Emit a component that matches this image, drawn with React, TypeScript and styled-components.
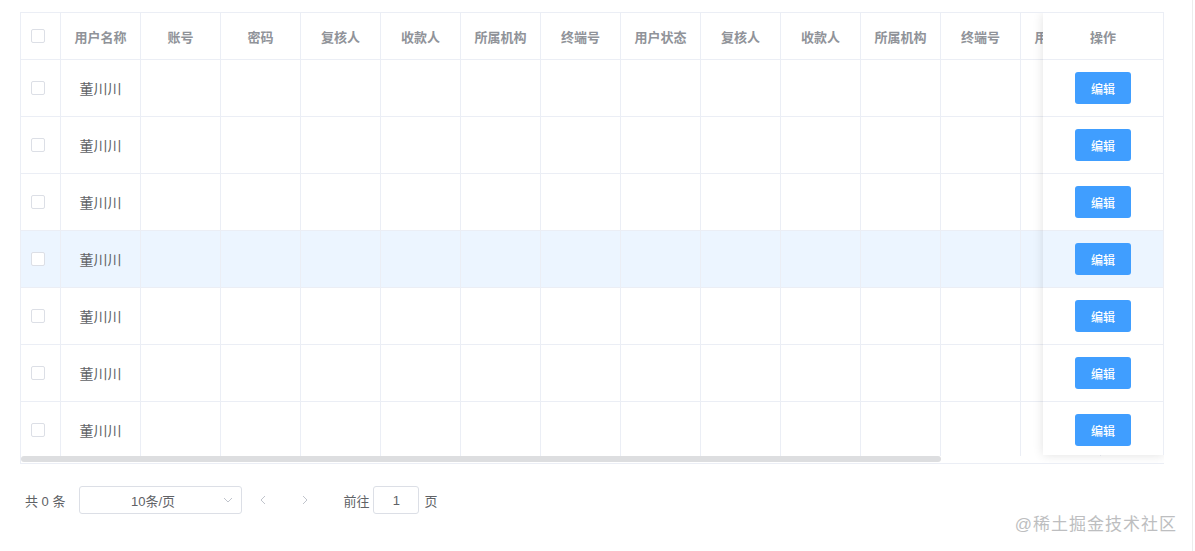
import React from 'react'
import styled, { createGlobalStyle } from 'styled-components'

const GlobalStyle = createGlobalStyle`
  html, body {
    margin: 0;
    padding: 0;
    background: #fff;
  }
  body {
    font-family: "Helvetica Neue", "Liberation Sans", "Noto Sans CJK SC", sans-serif;
    color: #606266;
  }
  * { box-sizing: border-box; }
`

const Page = styled.div`
  width: 1195px;
  height: 551px;
  padding: 12px 0 0 20px;
  position: relative;
  overflow: hidden;
`

const TableFrame = styled.div`
  position: relative;
  width: 1144px;
  border: 1px solid #ebeef5;
  border-right: none;
  overflow: hidden;
`

const BodyScroll = styled.div`
  overflow: hidden;
  width: 100%;
  height: 443px;
`

const Grid = styled.div`
  display: grid;
  grid-template-columns: 40px repeat(13, 80px) 120px;
  width: max-content;
`

interface RowProps {
  $hover?: boolean
}

const HeaderCell = styled.div`
  height: 47px;
  display: flex;
  align-items: center;
  justify-content: center;
  border-right: 1px solid #ebeef5;
  border-bottom: 1px solid #ebeef5;
  font-size: 13px;
  font-weight: 700;
  color: #909399;
  white-space: nowrap;
  overflow: hidden;
  background: #fff;
`

const Cell = styled.div<RowProps>`
  height: 57px;
  display: flex;
  align-items: center;
  justify-content: center;
  border-right: 1px solid #ebeef5;
  border-bottom: 1px solid #ebeef5;
  font-size: 14px;
  color: #606266;
  background: ${p => (p.$hover ? '#ecf5ff' : '#fff')};
`

const CheckCell = styled.div`
  display: flex;
  width: 100%;
  justify-content: center;
  padding-right: 5px;
`

const Checkbox = styled.span`
  display: inline-block;
  width: 14px;
  height: 14px;
  border: 1px solid #dcdfe6;
  border-radius: 2px;
  background: #fff;
`

const ScrollTrack = styled.div`
  height: 7px;
  width: 1024px;
  background: #fff;
`

const ScrollThumb = styled.div`
  height: 6px;
  width: 920px;
  border-radius: 3px;
  background: #dddee0;
`

const FixedRight = styled.div`
  position: absolute;
  top: 0;
  right: 0;
  width: 121px;
  height: 442px;
  overflow: hidden;
  background: #fff;
  box-shadow: 0 0 10px rgba(0, 0, 0, 0.12);
  border-right: 1px solid #ebeef5;
  display: flex;
  flex-direction: column;
`

const FixedHeader = styled(HeaderCell)`
  border-right: none;
  flex: none;
`

const FixedCell = styled(Cell)`
  border-right: none;
  flex: none;
`

const EditButton = styled.button`
  width: 56px;
  height: 32px;
  border: none;
  border-radius: 3px;
  background: #409eff;
  color: #fff;
  font-size: 12px;
  font-family: inherit;
  font-weight: 500;
  padding: 0;
  cursor: pointer;
`

const Pager = styled.div`
  display: flex;
  align-items: center;
  height: 28px;
  margin-top: 22px;
  padding-left: 5px;
  font-size: 13px;
  color: #606266;
`

const Total = styled.span`
  margin-right: 14px;
`

const SizeSelect = styled.div`
  position: relative;
  width: 163px;
  height: 28px;
  border: 1px solid #dcdfe6;
  border-radius: 3px;
  display: flex;
  align-items: center;
  justify-content: center;
  padding-right: 16px;
  font-size: 13px;
  color: #606266;
`

const SelectArrow = styled.span`
  position: absolute;
  right: 8px;
  top: 8px;
  display: flex;
`

const NavButton = styled.span`
  width: 42px;
  display: flex;
  justify-content: center;
  align-items: center;
  color: #c0c4cc;
`

const Jump = styled.span`
  margin-left: 17px;
  display: flex;
  align-items: center;
  gap: 4px;
`

const JumpInput = styled.div`
  width: 46px;
  height: 28px;
  border: 1px solid #dcdfe6;
  border-radius: 3px;
  display: flex;
  align-items: center;
  justify-content: center;
  margin: 0 1px 0 0;
`

const Watermark = styled.div`
  position: absolute;
  right: 18px;
  bottom: 16px;
  font-size: 17px;
  color: #bdbec0;
  letter-spacing: 1px;
`

const EdgeLine = styled.div`
  position: absolute;
  top: 0;
  right: 2px;
  width: 1px;
  height: 100%;
  background: #ececec;
`

const headers = [
  '用户名称', '账号', '密码', '复核人', '收款人', '所属机构', '终端号',
  '用户状态', '复核人', '收款人', '所属机构', '终端号', '用户状态', '操作',
]

const rows = Array.from({ length: 7 }, () => ({ name: '董川川' }))
const hoverRow = 3

const Chevron = ({ dir }: { dir: 'left' | 'right' | 'down' }) => {
  const d =
    dir === 'left' ? 'M7 1 L3 5 L7 9' : dir === 'right' ? 'M3 1 L7 5 L3 9' : 'M1 3 L5 7 L9 3'
  return (
    <svg width="10" height="10" viewBox="0 0 10 10" fill="none">
      <path d={d} stroke="#c0c4cc" strokeWidth="1" />
    </svg>
  )
}

export default function App() {
  return (
    <>
      <GlobalStyle />
      <Page>
        <TableFrame>
          <BodyScroll>
            <Grid>
              <HeaderCell>
                <CheckCell>
                  <Checkbox />
                </CheckCell>
              </HeaderCell>
              {headers.map((h, i) => (
                <HeaderCell key={i}>{h}</HeaderCell>
              ))}
              {rows.map((r, ri) => (
                <React.Fragment key={ri}>
                  <Cell $hover={ri === hoverRow}>
                    <CheckCell>
                      <Checkbox />
                    </CheckCell>
                  </Cell>
                  <Cell $hover={ri === hoverRow}>{r.name}</Cell>
                  {Array.from({ length: 13 }, (_, ci) => (
                    <Cell key={ci} $hover={ri === hoverRow} />
                  ))}
                </React.Fragment>
              ))}
            </Grid>
          </BodyScroll>
          <ScrollTrack>
            <ScrollThumb />
          </ScrollTrack>
          <FixedRight>
            <FixedHeader>操作</FixedHeader>
            {rows.map((_, ri) => (
              <FixedCell key={ri} $hover={ri === hoverRow}>
                <EditButton>编辑</EditButton>
              </FixedCell>
            ))}
          </FixedRight>
        </TableFrame>
        <Pager>
          <Total>共 0 条</Total>
          <SizeSelect>
            10条/页
            <SelectArrow>
              <Chevron dir="down" />
            </SelectArrow>
          </SizeSelect>
          <NavButton>
            <Chevron dir="left" />
          </NavButton>
          <NavButton>
            <Chevron dir="right" />
          </NavButton>
          <Jump>
            前往
            <JumpInput>1</JumpInput>
            页
          </Jump>
        </Pager>
        <Watermark>@稀土掘金技术社区</Watermark>
        <EdgeLine />
      </Page>
    </>
  )
}
